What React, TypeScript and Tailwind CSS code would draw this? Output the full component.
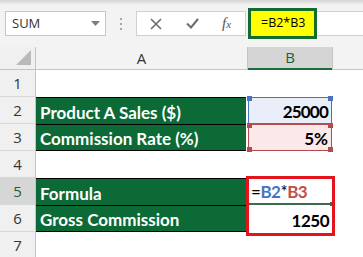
const ui = "font-['Open_Sans',sans-serif]"
const cell = "font-['Lato',sans-serif] font-bold"

const rows = [1, 2, 3, 4, 5, 6, 7]

const Corner = ({ color, pos }: { color: string; pos: string }) => (
    <span className={`absolute w-[5px] h-[5px] ${color} ${pos}`} />
)

export default function App() {
    return (
        <div className={`w-[363px] h-[257px] overflow-hidden bg-white ${ui}`}>
            {/* ribbon / formula bar */}
            <div className="h-[47px] bg-[#f3f3f3] flex flex-col">
                <div className="h-[5px] bg-gradient-to-b from-[#d4d4d4] to-[#f3f3f3]" />
                <div className="flex items-center h-[31px] mt-[3px] pl-[5px]">
                    <div className="w-[101px] h-[25px] bg-white border border-[#c6c6c6] flex items-center justify-between pl-[6px] pr-[5px]">
                        <span className="text-[13px] text-[#333]">SUM</span>
                        <svg width="9" height="5" viewBox="0 0 9 5">
                            <path d="M0 0 L9 0 L4.5 5 Z" fill="#7d7d7d" />
                        </svg>
                    </div>
                    <div className="flex flex-col gap-[3px] ml-[14px] w-[3px]">
                        <span className="w-[2px] h-[2px] bg-[#a8a8a8]" />
                        <span className="w-[2px] h-[2px] bg-[#a8a8a8]" />
                        <span className="w-[2px] h-[2px] bg-[#a8a8a8]" />
                    </div>
                    <div className="ml-[13px] w-[110px] h-[25px] bg-white border border-[#d0d0d0] flex items-center">
                        <svg className="ml-[13px]" width="12" height="12" viewBox="0 0 12 12">
                            <path d="M1 1 L11 11 M11 1 L1 11" stroke="#6b6b6b" strokeWidth="1.6" />
                        </svg>
                        <svg className="ml-[24px]" width="13" height="11" viewBox="0 0 13 11">
                            <path d="M1 5.5 L5 9.5 L12 1" stroke="#6b6b6b" strokeWidth="2" fill="none" />
                        </svg>
                        <span className="ml-[23px] font-['Liberation_Serif',serif] italic text-[15px] text-[#555] leading-none">
                            f<span className="text-[11px]">x</span>
                        </span>
                    </div>
                    <div className="ml-[2px] w-[69px] h-[31px] bg-[#ffff00] border-[3px] border-[#136b2c] flex items-center pl-[10px]">
                        <span className="text-[12.5px] text-black">=B2*B3</span>
                    </div>
                    <div className="flex-1 h-[25px] bg-white border-y border-[#d0d0d0]" />
                </div>
            </div>

            {/* sheet */}
            <div className="flex">
                {/* row headers */}
                <div className="w-[36px] flex flex-col border-r border-[#c4c4c4]">
                    <div className="h-[23px] bg-[#f0f0f0] border-b border-[#c4c4c4] relative">
                        <svg className="absolute right-[4px] bottom-[4px]" width="15" height="15" viewBox="0 0 15 15">
                            <path d="M15 0 L15 15 L0 15 Z" fill="#b9b9b9" />
                        </svg>
                    </div>
                    {rows.map((r) => (
                        <div
                            key={r}
                            className={`h-[27px] flex items-center justify-center text-[15px] border-b border-[#d6d6d6] ${
                                r === 5 ? "bg-[#d6d6d6] text-[#1e5e37]" : "bg-[#f0f0f0] text-[#333]"
                            }`}
                        >
                            {r}
                        </div>
                    ))}
                </div>

                {/* column A */}
                <div className="w-[212px] flex flex-col">
                    <div className="h-[23px] bg-[#f3f3f3] border-b border-r border-[#c4c4c4] flex items-center justify-center text-[15px] text-[#333]">
                        A
                    </div>
                    <div className="h-[27px]" />
                    <div className="h-[27px] bg-[#0b6a35] border-t border-black flex items-end pb-[3px] pl-[4px] mr-[2px]">
                        <span className={`${cell} text-[17px] text-white leading-none`}>Product A Sales ($)</span>
                    </div>
                    <div className="h-[27px] bg-[#0b6a35] border-y border-black flex items-end pb-[3px] pl-[4px] mr-[2px]">
                        <span className={`${cell} text-[17px] text-white leading-none`}>Commission Rate (%)</span>
                    </div>
                    <div className="h-[27px]" />
                    <div className="h-[27px] bg-[#0b6a35] border-t border-black flex items-end pb-[3px] pl-[4px] mr-[2px]">
                        <span className={`${cell} text-[17px] text-white leading-none`}>Formula</span>
                    </div>
                    <div className="h-[27px] bg-[#0b6a35] border-y border-black flex items-end pb-[3px] pl-[4px] mr-[2px]">
                        <span className={`${cell} text-[17px] text-white leading-none`}>Gross Commission</span>
                    </div>
                    <div className="h-[27px]" />
                </div>

                {/* column B */}
                <div className="w-[84px] flex flex-col">
                    <div className="h-[23px] bg-[#d5d5d5] border-b-2 border-[#1e6b3c] flex items-center justify-center text-[15px] text-[#1e5e37]">
                        B
                    </div>
                    <div className="h-[27px]" />
                    <div className="h-[27px] relative bg-[#e9eef8] border border-[#4a72c0] flex items-end justify-end pb-[3px] pr-[3px]">
                        <Corner color="bg-[#4a72c0]" pos="-left-[2px] -top-[2px]" />
                        <Corner color="bg-[#4a72c0]" pos="-right-[2px] -top-[2px]" />
                        <span className={`${cell} text-[17px] tracking-[-0.8px] text-black leading-none`}>25000</span>
                    </div>
                    <div className="h-[27px] relative bg-[#fbe9e9] border border-[#b34a4c] flex items-end justify-end pb-[3px] pr-[3px]">
                        <Corner color="bg-[#b34a4c]" pos="-left-[2px] -top-[2px]" />
                        <Corner color="bg-[#b34a4c]" pos="-right-[2px] -top-[2px]" />
                        <Corner color="bg-[#b34a4c]" pos="-left-[2px] -bottom-[2px]" />
                        <Corner color="bg-[#b34a4c]" pos="-right-[2px] -bottom-[2px]" />
                        <span className={`${cell} text-[17px] text-black leading-none`}>5%</span>
                    </div>
                    <div className="h-[27px]" />
                    <div className="relative">
                        <div className="h-[27px] relative border-b-2 border-[#3b6b4b] flex items-end pb-[3px] pl-[3px]">
                            <span className="absolute -right-[2px] -bottom-[3px] w-[4px] h-[4px] bg-[#3b6b4b]" />
                            <span className={`${cell} text-[17px] tracking-[-0.5px] leading-none`}>
                                <span className="font-normal text-black">=</span>
                                <span className="text-[#4472c4]">B2</span>
                                <span className="font-normal text-black">*</span>
                                <span className="text-[#c0504d]">B3</span>
                            </span>
                        </div>
                        <div className="h-[27px] flex items-end justify-end pb-[3px] pr-[3px]">
                            <span className={`${cell} text-[17px] tracking-[-0.5px] text-black leading-none`}>1250</span>
                        </div>
                        <div className="absolute -left-[2px] -top-[2px] -right-[3px] -bottom-[4px] border-[3px] border-[#e5141c]" />
                    </div>
                    <div className="h-[27px]" />
                </div>
                <div className="flex-1 flex flex-col">
                    <div className="h-[23px] bg-[#f3f3f3] border-b border-l border-[#c4c4c4]" />
                </div>
            </div>
        </div>
    )
}
